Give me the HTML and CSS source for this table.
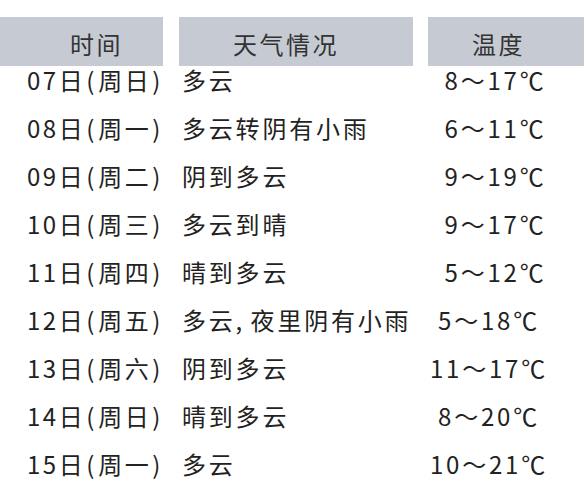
FILE: index.html
```html
<!DOCTYPE html>
<html lang="zh">
<head>
<meta charset="utf-8">
<link rel="stylesheet" href="styles.css">
</head>
<body>
<div class="table">
  <div class="head">
    <div class="hcell h1">时间</div>
    <div class="hcell h2">天气情况</div>
    <div class="hcell h3">温度</div>
  </div>
  <div class="row"><span class="date">07日<span class="p">(</span>周日<span class="p">)</span></span><span class="wx">多云</span><span class="temp t1">8～17℃</span></div>
  <div class="row"><span class="date">08日<span class="p">(</span>周一<span class="p">)</span></span><span class="wx">多云转阴有小雨</span><span class="temp t1">6～11℃</span></div>
  <div class="row"><span class="date">09日<span class="p">(</span>周二<span class="p">)</span></span><span class="wx">阴到多云</span><span class="temp t1">9～19℃</span></div>
  <div class="row"><span class="date">10日<span class="p">(</span>周三<span class="p">)</span></span><span class="wx">多云到晴</span><span class="temp t1">9～17℃</span></div>
  <div class="row"><span class="date">11日<span class="p">(</span>周四<span class="p">)</span></span><span class="wx">晴到多云</span><span class="temp t1">5～12℃</span></div>
  <div class="row"><span class="date">12日<span class="p">(</span>周五<span class="p">)</span></span><span class="wx">多云<span class="c">,</span>夜里阴有小雨</span><span class="temp">5～18℃</span></div>
  <div class="row"><span class="date">13日<span class="p">(</span>周六<span class="p">)</span></span><span class="wx">阴到多云</span><span class="temp">11～17℃</span></div>
  <div class="row"><span class="date">14日<span class="p">(</span>周日<span class="p">)</span></span><span class="wx">晴到多云</span><span class="temp">8～20℃</span></div>
  <div class="row"><span class="date">15日<span class="p">(</span>周一<span class="p">)</span></span><span class="wx">多云</span><span class="temp">10～21℃</span></div>
</div>
</body>
</html>
```
FILE: styles.css
```css
html, body {
  margin: 0;
  padding: 0;
  background: #ffffff;
}
body {
  font-family: "Noto Sans CJK SC", "Noto Sans", sans-serif;
  color: #222222;
  width: 584px;
  height: 500px;
  overflow: hidden;
}
.table {
  padding-top: 17px;
}
.head {
  display: grid;
  grid-template-columns: 163px 234px 156px;
  column-gap: 16px;
  height: 45px;
}
.head .h3 { margin-left: -1px; }
.hcell {
  background: #c6cbd3;
  color: #333333;
  font-size: 24px;
  letter-spacing: 2.5px;
  line-height: 45px;
  padding-top: 4px;
  box-sizing: border-box;
  text-align: center;
}
.h1 { padding-left: 30px; }
.h2 { padding-right: 20px; }
.h3 { padding-right: 16px; }
.row {
  display: flex;
  height: 48px;
  line-height: 36px;
  font-size: 24px;
  letter-spacing: 2.8px;
  white-space: nowrap;
}
.date {
  width: 155px;
  padding-left: 27px;
  box-sizing: content-box;
  letter-spacing: 2.5px;
}
.p {
  display: inline-block;
  width: 13px;
  text-align: center;
}
.c {
  display: inline-block;
  width: 15px;
}
.wx {
  width: 222px;
}
.temp {
  width: 170px;
  text-align: center;
  letter-spacing: 2.8px;
}
.t1 {
  padding-left: 13px;
  box-sizing: border-box;
}
</style>
```
